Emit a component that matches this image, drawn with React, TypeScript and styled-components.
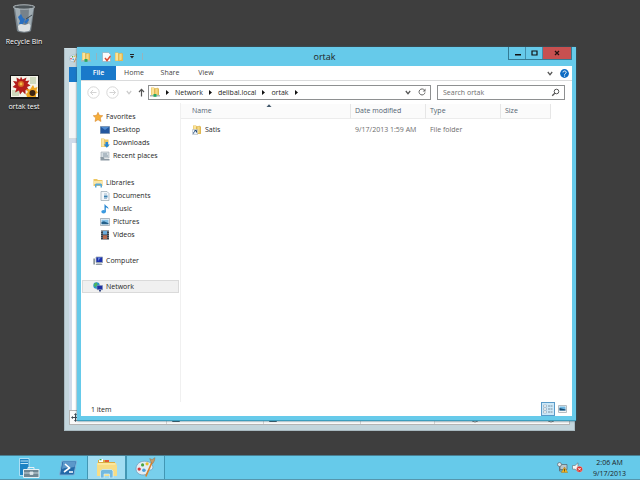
import React from "react";
import styled, { createGlobalStyle } from "styled-components";

const Global = createGlobalStyle`
  * { box-sizing: border-box; }
  body { margin: 0; background: #3e3e3e; font: 7px/13px "Open Sans", "Noto Sans", sans-serif; color: #1e1e1e; }
  button, input { font: inherit; color: inherit; margin: 0; padding: 0; border: 0; background: none; }
  svg { display: block; flex: none; }
  a { color: inherit; text-decoration: none; }
`;

const Screen = styled.div`
  min-height: 100vh;
  display: flex;
  flex-direction: column;
  background: #3e3e3e;
`;
const Desktop = styled.main`
  flex: 1;
  position: relative;
  min-height: 300px;
`;
const Shortcuts = styled.div`
  width: 48px;
  padding-top: 4px;
  display: flex;
  flex-direction: column;
  gap: 21px;
`;
const Shortcut = styled.button`
  display: flex;
  flex-direction: column;
  align-items: center;
  justify-content: flex-end;
  gap: 1px;
  height: 44px;
  color: #fff;
  text-shadow: 0 1px 1px #000;
  white-space: nowrap;
`;

const PaintWindow = styled.section`
  position: absolute;
  top: 48px;
  left: 64px;
  right: 65px;
  bottom: 24px;
  padding: 0 4px 5px;
  background: #c3d5dc;
  border: 1px solid #a9bac1;
  border-top-color: #ccdde4;
  display: flex;
  flex-direction: column;
`;
const PaintTitle = styled.div`
  height: 18px;
  padding-top: 4px;
`;
const PaintTab = styled.div`
  width: 36px;
  height: 15px;
  background: #1979ca;
`;
const PaintRibbon = styled.div`
  height: 57px;
  background: #f5f6f7;
  border-bottom: 1px solid #d5dbe0;
`;
const PaintCanvas = styled.div`
  flex: 1;
  background: #d0dbea;
  padding: 4px 0 0 3px;
  display: flex;
  &::after { content: ""; flex: 1; background: #fff; }
`;
const PaintStatus = styled.div`
  height: 15px;
  background: #fafafa;
  border: 1px solid #b4b4b4;
  display: flex;
  align-items: center;
`;
const PaintCell = styled.span<{ $w: number }>`
  width: ${(p) => p.$w}px;
  height: 13px;
  padding-left: 1px;
  display: flex;
  align-items: center;
  border-right: 1px solid #d4d4d4;
`;
const ZoomControls = styled.span`
  flex: 1;
  display: flex;
  align-items: center;
  justify-content: space-between;
  padding: 0 13px 0 35px;
  background: #eee;
`;

const ExplorerWindow = styled.section`
  position: absolute;
  top: 47px;
  left: 77px;
  right: 64px;
  bottom: 34px;
  padding: 0 4px 4px;
  background: #66caea;
  border-bottom: 1px solid #3d9dbd;
  box-shadow: 0 0 2px #2d6077;
  display: flex;
  flex-direction: column;
`;
const TitleBar = styled.header`
  height: 19px;
  display: grid;
  grid-template-columns: 1fr auto 1fr;
  align-items: center;
`;
const QuickAccess = styled.div`
  display: flex;
  align-items: center;
  gap: 3px;
`;
const Divider = styled.i`
  width: 1px;
  height: 7px;
  margin: 0 2px;
  background: #96b4bd;
`;
const Title = styled.h1`
  margin: 0;
  padding-right: 4px;
  font-size: 9px;
  line-height: 18px;
  font-weight: 400;
`;
const WindowButtons = styled.div`
  align-self: start;
  justify-self: end;
  display: flex;
  height: 13px;
  border: 1px solid #347b94;
  border-top: 0;
`;
const WindowButton = styled.button<{ $close?: boolean }>`
  width: ${(p) => (p.$close ? 28 : 17)}px;
  display: grid;
  place-items: center;
  background: ${(p) => (p.$close ? "#c75050" : "transparent")};
  border-right: ${(p) => (p.$close ? 0 : 1)}px solid #438fac;
`;
const Client = styled.div`
  flex: 1;
  min-height: 0;
  background: #fff;
  display: flex;
  flex-direction: column;
`;
const Ribbon = styled.nav`
  height: 15px;
  display: flex;
  border-bottom: 1px solid #dadbdc;
`;
const Tab = styled.button<{ $file?: boolean }>`
  width: ${(p) => (p.$file ? 35 : 36)}px;
  line-height: 14px;
  background: ${(p) => (p.$file ? "#1979ca" : "#fff")};
  color: ${(p) => (p.$file ? "#fff" : "#444")};
  font-weight: ${(p) => (p.$file ? 600 : 400)};
`;
const RibbonTools = styled.div`
  margin-left: auto;
  padding-right: 3px;
  display: flex;
  align-items: center;
  gap: 7px;
`;
const AddressRow = styled.div`
  height: 22px;
  padding: 0 7px 0 6px;
  display: flex;
  align-items: center;
`;
const NavButtons = styled.div`
  width: 61px;
  display: flex;
  align-items: center;
  justify-content: space-between;
  padding-right: 3px;
`;
const IconButton = styled.button`
  display: grid;
  place-items: center;
`;
const Field = styled.div<{ $grow?: boolean }>`
  height: 15px;
  border: 1px solid #8e9091;
  display: flex;
  align-items: center;
  flex: ${(p) => (p.$grow ? "1" : "0 0 128px")};
  margin-left: ${(p) => (p.$grow ? 0 : 6)}px;
  padding: 0 4px 0 ${(p) => (p.$grow ? 1 : 5)}px;
  min-width: 0;
`;
const Crumbs = styled.div`
  flex: 1;
  display: flex;
  align-items: center;
  gap: 6px;
`;
const FieldTools = styled.div`
  display: flex;
  align-items: center;
  gap: 7px;
`;
const SearchInput = styled.input`
  flex: 1;
  min-width: 0;
  height: 13px;
  outline: 0;
  &::placeholder { color: #6d6d6d; opacity: 1; }
`;
const Body = styled.div`
  flex: 1;
  min-height: 0;
  display: flex;
`;
const Sidebar = styled.nav`
  width: 100px;
  padding: 7px 1px 0;
  border-right: 1px solid #f0f0f0;
`;
const Group = styled.div`
  margin-bottom: 13px;
  &:first-child { margin-bottom: 14px; }
`;
const Place = styled.a<{ $child?: boolean; $on?: boolean }>`
  height: 13px;
  padding-left: ${(p) => (p.$child ? 18 : 11)}px;
  display: flex;
  align-items: center;
  gap: 3px;
  background: ${(p) => (p.$on ? "#f0f0f0" : "transparent")};
  box-shadow: ${(p) => (p.$on ? "inset 0 0 0 1px #dadada" : "none")};
`;
const Files = styled.div`
  flex: 1;
  padding-top: 1px;
`;
const Table = styled.table`
  border-collapse: separate;
  border-spacing: 0;
  table-layout: fixed;
  width: 370px;
  max-width: 100%;
  text-align: left;
`;
const Head = styled.th<{ $w: number; $first?: boolean }>`
  position: relative;
  width: ${(p) => p.$w}px;
  height: 15px;
  padding: 0 0 0 ${(p) => (p.$first ? 11 : 4)}px;
  font-weight: 400;
  line-height: 14px;
  color: #536371;
  background: #fbfbfb;
  border-right: 1px solid #e6e6e6;
  border-bottom: 1px solid #ececec;
`;
const SortMark = styled.span`
  position: absolute;
  top: 0;
  left: 50%;
`;
const Cell = styled.td<{ $first?: boolean }>`
  padding: 4px 0 0 ${(p) => (p.$first ? 11 : 4)}px;
  color: #6d6d6d;
  white-space: nowrap;
`;
const FileName = styled.a`
  display: flex;
  align-items: center;
  gap: 3px;
  color: #1e1e1e;
`;
const StatusBar = styled.footer`
  height: 14px;
  padding: 0 3px 0 10px;
  display: flex;
  align-items: center;
  justify-content: space-between;
`;
const Views = styled.div`
  display: flex;
`;
const ViewButton = styled.button<{ $on?: boolean }>`
  width: 14px;
  height: 14px;
  display: grid;
  place-items: center;
  border: 1px solid ${(p) => (p.$on ? "#5a9bc9" : "transparent")};
  background: ${(p) => (p.$on ? "#cce8f8" : "transparent")};
`;

const Taskbar = styled.footer`
  height: 25px;
  background: #66caea;
  border-top: 1px solid #497f92;
  border-bottom: 1px solid #5596ad;
  display: flex;
  align-items: stretch;
  padding-left: 9px;
`;
const Task = styled.button<{ $open?: boolean; $active?: boolean }>`
  width: 39px;
  display: grid;
  place-items: center;
  border: solid #4297b4;
  border-width: 0 ${(p) => (p.$open ? 1 : 0)}px;
  background: ${(p) => (p.$active ? "#a1ddf2" : p.$open ? "#78cfec" : "transparent")};
`;
const Tray = styled.div`
  margin-left: auto;
  display: flex;
  align-items: center;
  gap: 4px;
`;
const Clock = styled.time`
  width: 53px;
  padding-right: 8px;
  text-align: center;
  line-height: 11px;
`;

const Folder = ({ share = false, link = false, size = 10 }) => (
  <svg width={size} height={size} viewBox="0 0 10 10">
    <path d="M1 0.5h3l1 1h4v7.5H1z" fill="#e5be58" />
    <path d="M1.5 1h2.5v7.5h-2.5z" fill="#fbe49a" />
    <path d="M5 1.8l3-.8v7l-3 1z" fill="#f5d981" stroke="#c99e3c" strokeWidth=".4" />
    {share && <><path d="M0 8h10v1.5H0z" fill="#a6b9b4" /><path d="M3.5 7h3v2.8h-3z" fill="#29a85e" /></>}
    {link && <><path d="M.5 4.500h5v5h-5z" fill="#eef3f8" stroke="#9eabb7" strokeWidth=".5" /><path d="M1.6 8.6c0-1.5.6-2.2 1.8-2.3M2.5 5.5h2v2" stroke="#244a78" fill="none" /></>}
  </svg>
);
const Palette = ({ size = 20 }) => (
  <svg width={size} height={size} viewBox="0 0 20 20">
    <path d="M9 4c5 0 8 2.6 8 6 0 2-2 2.5-3.5 2.5-2 0-1 2-2.5 3.5-1.5 1.400-4.500 1.500-7 .3C1.500 15 .8 12.800 1 10.500 1.400 6.500 4.800 4 9 4z" fill="#e3edf4" stroke="#6e9ab8" strokeWidth=".7" />
    <circle cx="4" cy="11.500" r="1.600" fill="#d8363a" /><circle cx="7.200" cy="7.500" r="1.500" fill="#48a43f" />
    <circle cx="11.500" cy="6.500" r="1.500" fill="#e7bd2e" /><circle cx="8.500" cy="12.700" r="1.700" fill="#4b9edc" />
    <path d="M10.500 18L16.200 5" stroke="#d9822b" strokeWidth="1.500" strokeLinecap="round" />
    <path d="M15.500 5.500L14 1.500l2.300 1L19 .6l-.5 3-1.500 2.600z" fill="#c79c68" stroke="#94683c" strokeWidth=".4" />
  </svg>
);
const RecycleBin = () => (
  <svg width="24" height="30" viewBox="0 0 24 30">
    <path d="M1.500 2.500L5 27c3 2.300 11 2.300 14 0L22.500 2.500z" fill="#77828a" />
    <path d="M3 4l3.500 22h3L8 4zM17 4l-1 22h2L21.500 4z" fill="#b8c4cb" opacity=".65" />
    <ellipse cx="12" cy="3" rx="10.700" ry="2.200" fill="#4b5357" stroke="#b2babe" />
    <path d="M6 13l3-3 2 4 2 1-2 5H7l1-3zM12 18l4-4 1 2-3 4z" fill="#2a6fc0" />
    <path d="M14 15l6-4" stroke="#3e4a52" />
    <path d="M6 22l3-2 4 1 4-1.500 1.500 2-.8 5c-3 1.500-8 1.500-11 0z" fill="#dde1e2" />
  </svg>
);
const Flowers = () => (
  <svg width="29" height="24" viewBox="0 0 29 24">
    <path d="M0 0h29v24H0z" fill="#171717" /><path d="M1 1h27v21H1z" fill="#f4f3e8" />
    <path d="M20 2h6v7h-6zM2 15h7v6H2z" fill="#cfd9bd" />
    <path d="M11 1.500l1.500 3 4-2-1 3.500 4-.5-2 3 3 2-3.500 1.500 2.500 4-4-1 0 4.500-3-3-2.500 3-1-4-4 2 1.500-4L2.500 12l3-2.500L3 6l4 .5L6.500 2.500 10 4.500z" fill="#b21d1b" />
    <circle cx="11" cy="9" r="3" fill="#d76a24" /><circle cx="11" cy="9" r="1.400" fill="#f0bd46" />
    <path d="M23 10l1.500 3 3-1-1 3.500 1.500 2-2 1.500v3h-9l-1-3 2-2-2-3 4 .5z" fill="#eea51f" />
    <circle cx="22.500" cy="18" r="3" fill="#3c2412" />
  </svg>
);
const Caret = () => <svg width="3" height="5" viewBox="0 0 3 5"><path d="M0 0l3 2.500L0 5z" fill="#111" /></svg>;
const Chevron = ({ color = "#555" }) => (
  <svg width="6" height="5" viewBox="0 0 6 5"><path d="M.8 1L3 3.700 5.200 1" fill="none" stroke={color} strokeWidth="1.200" /></svg>
);
const Arrow = ({ flip = false }) => (
  <svg width="13" height="13" viewBox="0 0 13 13">
    <circle cx="6.500" cy="6.500" r="5.700" fill="none" stroke="#d8d8d8" />
    <path d={flip ? "M3.500 6.500h6M7 4l2.500 2.500L7 9" : "M9.500 6.500h-6M6 4L3.500 6.500 6 9"} fill="none" stroke="#d4d4d4" />
  </svg>
);

const placeArt: Record<string, React.ReactNode> = {
  Favorites: <path d="M5 .3l1.400 3 3.400.4-2.500 2.300.7 3.500L5 7.800 2 9.500l.7-3.500L.2 3.700l3.400-.4z" fill="#f5ae3a" stroke="#d57f1e" strokeWidth=".5" />,
  Desktop: <><path d="M.3 1.500h9.400v7H.3z" fill="#23579e" stroke="#7089a6" strokeWidth=".6" /><path d="M1 2h8L5 5z" fill="#4f8bd0" /></>,
  Downloads: <><path d="M1 .5h3l1 1h3.500V9H1z" fill="#ecc866" /><path d="M1.500 1H4v7.500H1.500z" fill="#fbe6a5" /><path d="M5.500 4h2.500v2.500h1.800L6.800 9.800 3.700 6.500h1.800z" fill="#2687d5" /></>,
  "Recent places": <><path d="M1 1h8v6H1z" fill="#d6dee3" stroke="#9da8af" strokeWidth=".6" /><path d="M3 3h4M3 5h5" stroke="#8798a5" /><path d="M.5 6h3l1 2h5v1.500h-9z" fill="#8d9aa3" /></>,
  Libraries: <><path d="M.5 1h3.500l1 1H9.500v6H.5z" fill="#edc762" /><path d="M.5 3h9v3h-9z" fill="#f9e7aa" /><path d="M2 9.500V6.500l1-1h5l1 1v3H7.500v-2h-4v2z" fill="#58a9d9" /></>,
  Documents: <><path d="M1 .5h6L9 2.500v7H1z" fill="#f4f7fa" stroke="#99a7b2" strokeWidth=".7" /><path d="M4 3h3M4 7.500h3" stroke="#7da0bf" strokeWidth=".7" /><path d="M4 4.500h3.500v2H4z" fill="#397fae" /></>,
  Music: <><path d="M5 .3c.5 2 4 2 3.300 5C7.500 3.800 6.300 3.700 5.800 3.600V8H4.500V.3z" fill="#2586d1" /><ellipse cx="3.600" cy="7.800" rx="2.300" ry="1.800" fill="#3b9ae0" /></>,
  Pictures: <><path d="M.4 1.500h9.200v7H.4z" fill="#f1f4f6" stroke="#8b9aa5" strokeWidth=".7" /><path d="M1.500 2.700h7v4.600h-7z" fill="#82bfe6" /><path d="M1.500 5l2.500-.7 4.500 2v1h-7z" fill="#24608a" /></>,
  Videos: <><path d="M1 .5h8v9H1z" fill="#36404a" /><path d="M3 1h4v3.500H3z" fill="#6badde" /><path d="M3 5.200h4V9H3z" fill="#b86b4f" /><path d="M1.900 1v8M8.100 1v8" stroke="#cbd2d6" strokeWidth=".7" strokeDasharray="1 1" /></>,
  Computer: <><path d="M3 1h6.700v5.500H3z" fill="#1b2fae" stroke="#9aa7b0" strokeWidth=".8" /><path d="M.3 2.500H2v6H.3z" fill="#8c969c" /><path d="M3.500 7.500h5l1 1.500h-7z" fill="#929ca3" /><path d="M5 1.500h3L5 5z" fill="#6380dd" /></>,
  Network: <><circle cx="3.500" cy="3.500" r="3.200" fill="#2997ca" /><path d="M1.500 1.500l2-1 1 2-2 2.500-1.500-1z" fill="#4eb758" /><path d="M4 3.500h5.600v4.200H4z" fill="#1d2fa4" stroke="#8a97b5" strokeWidth=".6" /><path d="M6 8h2v1.500H6z" fill="#364a88" /></>,
};
const groups = [
  ["Favorites", "Desktop", "Downloads", "Recent places"],
  ["Libraries", "Documents", "Music", "Pictures", "Videos"],
  ["Computer"],
  ["Network"],
];

export default function App() {
  return (
    <Screen>
      <Global />
      <Desktop>
        <Shortcuts>
          <Shortcut><RecycleBin />Recycle Bin</Shortcut>
          <Shortcut><Flowers />ortak test</Shortcut>
        </Shortcuts>

        <PaintWindow aria-label="Paint">
          <PaintTitle><Palette size={10} /></PaintTitle>
          <PaintTab />
          <PaintRibbon />
          <PaintCanvas />
          <PaintStatus>
            <PaintCell $w={97}>
              <svg width="9" height="9" viewBox="0 0 9 9"><path d="M4.500 1v7M1 4.500h7" stroke="#3d4850" /><path d="M3 2l1.500-2L6 2zM3 7l1.500 2L6 7zM2 3L0 4.500 2 6zM7 3l2 1.500L7 6z" fill="#3d4850" /></svg>
            </PaintCell>
            {[0, 1].map((k) => (
              <PaintCell key={k} $w={97}>
                <svg width="13" height="11" viewBox="0 0 13 11"><path d="M4.500 1.500h7v8h-7z" fill="#fff" stroke="#3d5560" /></svg>
              </PaintCell>
            ))}
            <PaintCell $w={74} />
            <ZoomControls>
              {[0, 1].map((k) => <svg key={k} width="10" height="10" viewBox="0 0 10 10"><circle cx="5" cy="5" r="4" fill="#f7f7f7" stroke="#777" /></svg>)}
            </ZoomControls>
          </PaintStatus>
        </PaintWindow>

        <ExplorerWindow aria-label="ortak">
          <TitleBar>
            <QuickAccess>
              <Folder share /><Divider />
              <svg width="9" height="10" viewBox="0 0 9 10"><path d="M.5.500h6L8.500 2.500v7h-8z" fill="#fafafa" stroke="#8fa6b3" strokeWidth=".6" /><path d="M3 6l2 2.500L8.500 4" stroke="#dc4b32" strokeWidth="1.500" fill="none" /></svg>
              <Folder />
              <svg width="10" height="5" viewBox="0 0 10 5"><path d="M3 .5h4" stroke="#222" /><path d="M3 2h4L5 4.500z" fill="#222" /></svg>
              <Divider />
            </QuickAccess>
            <Title>ortak</Title>
            <WindowButtons>
              <WindowButton aria-label="Minimize"><svg width="7" height="6" viewBox="0 0 7 6"><path d="M1 4h6v1.500H1z" fill="#111" /></svg></WindowButton>
              <WindowButton aria-label="Maximize"><svg width="7" height="6" viewBox="0 0 7 6"><path d="M1 1h5v4H1z" fill="none" stroke="#111" strokeWidth="1.200" /></svg></WindowButton>
              <WindowButton $close aria-label="Close"><svg width="6" height="6" viewBox="0 0 6 6"><path d="M1 1l4 4M5 1L1 5" stroke="#251010" strokeWidth="1.300" /></svg></WindowButton>
            </WindowButtons>
          </TitleBar>
          <Client>
            <Ribbon>
              <Tab $file>File</Tab><Tab>Home</Tab><Tab>Share</Tab><Tab>View</Tab>
              <RibbonTools>
                <IconButton aria-label="Expand ribbon"><Chevron /></IconButton>
                <IconButton aria-label="Help">
                  <svg width="9" height="9" viewBox="0 0 9 9"><circle cx="4.500" cy="4.500" r="4.400" fill="#0e6cc4" /><path d="M3 3.400c0-2 3.200-1.800 3.200 0 0 1.200-1.600 1.100-1.600 2.300M4.600 6.500v1.100" stroke="#fff" fill="none" /></svg>
                </IconButton>
              </RibbonTools>
            </Ribbon>
            <AddressRow>
              <NavButtons>
                <IconButton aria-label="Back"><Arrow /></IconButton>
                <IconButton aria-label="Forward"><Arrow flip /></IconButton>
                <IconButton aria-label="Recent locations"><Chevron color="#ccc" /></IconButton>
                <IconButton aria-label="Up"><svg width="7" height="9" viewBox="0 0 7 9"><path d="M3.500 8.500V1.500M1 4l2.500-2.700L6 4" fill="none" stroke="#555" strokeWidth="1.200" /></svg></IconButton>
              </NavButtons>
              <Field $grow>
                <Crumbs><Folder share /><Caret /><a href="#network">Network</a><Caret /><a href="#domain">delibal.local</a><Caret /><a href="#ortak">ortak</a><Caret /></Crumbs>
                <FieldTools>
                  <IconButton aria-label="Previous locations"><Chevron /></IconButton>
                  <IconButton aria-label="Refresh"><svg width="8" height="8" viewBox="0 0 8 8"><path d="M6.500 2.200A3 3 0 1 0 7 4.500" fill="none" stroke="#666" /><path d="M7.500.5v3H4.700z" fill="#666" /></svg></IconButton>
                </FieldTools>
              </Field>
              <Field>
                <SearchInput aria-label="Search ortak" placeholder="Search ortak" />
                <svg width="9" height="9" viewBox="0 0 9 9"><circle cx="5.500" cy="3.500" r="2.300" fill="none" stroke="#555" /><path d="M3.800 5.200L1.200 7.800" stroke="#555" strokeWidth="1.300" /></svg>
              </Field>
            </AddressRow>
            <Body>
              <Sidebar>
                {groups.map((names) => (
                  <Group key={names[0]}>
                    {names.map((name, i) => (
                      <Place key={name} href={`#${name}`} $child={i > 0} $on={name === "Network"}>
                        <svg width={10} height={10} viewBox="0 0 10 10">{placeArt[name]}</svg>
                        {name}
                      </Place>
                    ))}
                  </Group>
                ))}
              </Sidebar>
              <Files>
                <Table>
                  <thead>
                    <tr>
                      <Head $w={170} $first>Name<SortMark><svg width="6" height="4" viewBox="0 0 6 4"><path d="M.5 3L3 .3 5.500 3z" fill="#42586b" /></svg></SortMark></Head>
                      <Head $w={75}>Date modified</Head><Head $w={75}>Type</Head><Head $w={50}>Size</Head>
                    </tr>
                  </thead>
                  <tbody>
                    <tr>
                      <Cell $first><FileName href="#satis"><Folder link />Satis</FileName></Cell>
                      <Cell>9/17/2013 1:59 AM</Cell><Cell>File folder</Cell><Cell />
                    </tr>
                  </tbody>
                </Table>
              </Files>
            </Body>
            <StatusBar>
              <span>1 item</span>
              <Views>
                <ViewButton $on aria-label="Details view"><svg width="10" height="10" viewBox="0 0 10 10"><path d="M.5 1h3v2h-3zM.5 4h3v2h-3zM.5 7h3v2h-3z" fill="#fff" stroke="#7c95a8" strokeWidth=".5" /><path d="M5 2h4.500M5 5h4.500M5 8h4.500" stroke="#68798a" strokeDasharray="2 .5" strokeWidth=".8" /></svg></ViewButton>
                <ViewButton aria-label="Large icons view"><svg width="9" height="8" viewBox="0 0 9 8"><path d="M.5.500h8v7h-8z" fill="#f5f5f5" stroke="#b6bdc2" /><path d="M1.500 1.500h6v4h-6z" fill="#6db7e3" /><path d="M1.500 3l2 .5 4 1v1h-6z" fill="#174a70" /></svg></ViewButton>
              </Views>
            </StatusBar>
          </Client>
        </ExplorerWindow>
      </Desktop>

      <Taskbar>
        <Task aria-label="Server Manager">
          <svg width="22" height="22" viewBox="0 0 22 22"><path d="M1.500 1.500h9.500v17H1.500z" fill="#1c83c4" stroke="#c8ecfb" strokeWidth=".8" /><path d="M2.500 4h7.500M2.500 6.500h7.500" stroke="#bfe6f7" /><path d="M5.500 12.500h15.500v8H5.500z" fill="#6f8793" stroke="#e3f0f5" /><path d="M10 12.500v-2h6v2" fill="none" stroke="#e3f0f5" /><path d="M6 16h15M12 15h3v2.500h-3z" stroke="#dce7eb" fill="#dce7eb" strokeWidth=".8" /></svg>
        </Task>
        <Task aria-label="PowerShell">
          <svg width="20" height="18" viewBox="0 0 20 18"><path d="M4 2h14.500L16 16H1.500z" fill="#2369a8" stroke="#7fb2d8" /><path d="M5 3h12.500l-1 5C12 9 8 8 4 10z" fill="#5c98ca" /><path d="M7 5l4.500 4L6 13M11 13h4" fill="none" stroke="#fff" strokeWidth="1.600" /></svg>
        </Task>
        <Task $open $active aria-label="File Explorer">
          <svg width="22" height="20" viewBox="0 0 22 20"><path d="M2 2h7l1.500 2H19v14H2z" fill="#d9af45" /><path d="M3 1h4v3H3z" fill="#fff" /><path d="M3.500 1h2v1.300h-2z" fill="#3ba54a" /><path d="M9 2h4v2H9z" fill="#e35a36" /><path d="M1 5h19l1 3v10H1z" fill="#f7dd85" /><path d="M1.500 6h18" stroke="#fff0b6" /><path d="M4.500 20v-7l1.500-1.500h9.500L17 13v7h-3.500v-4H8v4z" fill="#74b9df" stroke="#d8f1fb" strokeWidth=".7" /></svg>
        </Task>
        <Task $open aria-label="Paint"><Palette size={21} /></Task>
        <Tray>
          <svg width="11" height="11" viewBox="0 0 11 11"><path d="M3 2.500h7v5H3z" fill="#b9c6cb" stroke="#52636c" strokeWidth=".7" /><circle cx="2.500" cy="2.500" r="2" fill="#e4e9ec" stroke="#5a6970" strokeWidth=".7" /><path d="M2.500 4.500V9h3" fill="none" stroke="#63757d" /><path d="M7.500 5l3.200 5.500H4.300z" fill="#f4b41f" stroke="#a56c0b" strokeWidth=".4" /><path d="M7.500 6.800v2.700" stroke="#4b3512" strokeWidth=".8" /></svg>
          <svg width="11" height="11" viewBox="0 0 11 11"><path d="M.5 3.500H3L6 .8v9L3 7.200H.5z" fill="#f4f4f4" stroke="#6c7b83" strokeWidth=".7" /><circle cx="7.500" cy="7.200" r="3" fill="#d8322b" stroke="#f2dcdc" strokeWidth=".4" /><path d="M6.300 6l2.400 2.400M8.700 6L6.300 8.400" stroke="#fff" strokeWidth=".9" /></svg>
          <Clock>2:06 AM<br />9/17/2013</Clock>
        </Tray>
      </Taskbar>
    </Screen>
  );
}
